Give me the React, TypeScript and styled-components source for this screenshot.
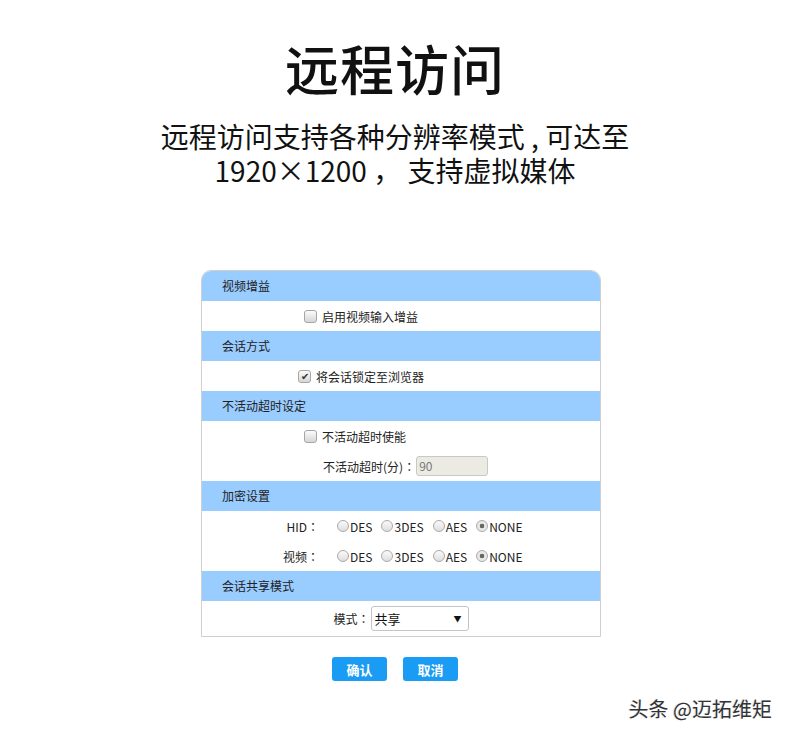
import styled, { createGlobalStyle } from 'styled-components'

const GlobalStyle = createGlobalStyle`
	html, body {
		margin: 0;
		padding: 0;
		background: #ffffff;
	}
	body {
		font-family: "Noto Sans CJK SC", "Noto Sans", sans-serif;
		color: #222;
	}
`

type Option = { label: string; checked?: boolean }

const encOptions: Option[] = [
	{ label: 'DES' },
	{ label: '3DES' },
	{ label: 'AES' },
	{ label: 'NONE', checked: true },
]

function RadioGroup({ options }: { options: Option[] }) {
	return (
		<Options>
			{options.map((o) => (
				<RadioItem key={o.label}>
					<Radio $checked={o.checked} />
					{o.label}
				</RadioItem>
			))}
		</Options>
	)
}

function App() {
	return (
		<Page>
			<GlobalStyle />
			<Title>远程访问</Title>
			<Subtitle>
				远程访问支持各种分辨率模式 , 可达至
				<br />
				1920×1200 ， 支持虚拟媒体
			</Subtitle>
			<Panel>
				<SectionHeader>视频增益</SectionHeader>
				<Row $indent={102}>
					<Checkbox />
					<span>启用视频输入增益</span>
				</Row>
				<SectionHeader>会话方式</SectionHeader>
				<Row $indent={96}>
					<Checkbox $checked>✔</Checkbox>
					<span>将会话锁定至浏览器</span>
				</Row>
				<SectionHeader>不活动超时设定</SectionHeader>
				<Row $indent={102}>
					<Checkbox />
					<span>不活动超时使能</span>
				</Row>
				<Row $indent={121}>
					<span>
						不活动超时(分)<Colon>：</Colon>
					</span>
					<TextInput>90</TextInput>
				</Row>
				<SectionHeader>加密设置</SectionHeader>
				<Row>
					<FieldLabel>
						HID<Colon>：</Colon>
					</FieldLabel>
					<RadioGroup options={encOptions} />
				</Row>
				<Row>
					<FieldLabel>
						视频<Colon>：</Colon>
					</FieldLabel>
					<RadioGroup options={encOptions} />
				</Row>
				<SectionHeader>会话共享模式</SectionHeader>
				<SelectRow>
					<span>
						模式<Colon>：</Colon>
					</span>
					<Select>
						<span>共享</span>
						<Arrow>▼</Arrow>
					</Select>
				</SelectRow>
			</Panel>
			<Buttons>
				<Button>确认</Button>
				<Button>取消</Button>
			</Buttons>
			<Watermark>头条 @迈拓维矩</Watermark>
		</Page>
	)
}

const Page = styled.div`
	position: relative;
	width: 790px;
	height: 736px;
	overflow: hidden;
	display: flex;
	flex-direction: column;
	align-items: center;
`
const Title = styled.h1`
	margin: 30px 0 0;
	font-size: 54px;
	line-height: 76px;
	font-weight: 500;
	color: #111;
	letter-spacing: 1px;
`
const Subtitle = styled.p`
	margin: 13px 0 0;
	font-size: 28px;
	line-height: 34px;
	text-align: center;
	color: #111;
`
const Panel = styled.div`
	align-self: flex-start;
	margin: 83px 0 0 201px;
	width: 398px;
	border: 1px solid #cfcfcf;
	border-radius: 10px 10px 0 0;
	overflow: hidden;
	font-size: 12px;
`
const SectionHeader = styled.div`
	height: 30px;
	line-height: 30px;
	padding-left: 20px;
	background: #99ccff;
	color: #222;
`
const Row = styled.div<{ $indent?: number }>`
	height: 30px;
	display: flex;
	align-items: center;
	padding-left: ${(p) => p.$indent ?? 0}px;
	color: #222;
`
const SelectRow = styled.div`
	height: 35px;
	display: flex;
	align-items: center;
	justify-content: center;
	gap: 1px;
`
const Colon = styled.span`
	font-family: "Noto Sans CJK TC", sans-serif;
`
const Checkbox = styled.span<{ $checked?: boolean }>`
	box-sizing: border-box;
	width: 13px;
	height: 13px;
	margin-right: 5px;
	border: 1px solid #a6a6a6;
	border-radius: 3px;
	background: linear-gradient(#fbfbfb, #d6d6d6);
	display: inline-flex;
	align-items: center;
	justify-content: center;
	font-size: 10px;
	line-height: 1;
	color: #333;
`
const TextInput = styled.span`
	box-sizing: border-box;
	width: 72px;
	height: 20px;
	margin-left: 1px;
	padding-left: 2px;
	border: 1px solid #c8c8c8;
	border-radius: 3px;
	background: #ebebe4;
	color: #777;
	line-height: 18px;
`
const FieldLabel = styled.span`
	width: 117px;
	margin-right: 18px;
	text-align: right;
`
const Options = styled.div`
	display: flex;
	gap: 9px;
`
const RadioItem = styled.span`
	display: inline-flex;
	align-items: center;
	color: #222;
`
const Radio = styled.span<{ $checked?: boolean }>`
	box-sizing: border-box;
	width: 12px;
	height: 12px;
	margin-right: 1px;
	border: 1px solid #aaaaaa;
	border-radius: 50%;
	background: ${(p) =>
		p.$checked
			? 'radial-gradient(circle, #666 0 2px, #e8e8e8 2.6px)'
			: 'linear-gradient(#fafafa, #dedede)'};
`
const Select = styled.div`
	box-sizing: border-box;
	width: 98px;
	height: 25px;
	padding: 0 6px 0 3px;
	border: 1px solid #c4c4c4;
	border-radius: 3px;
	display: flex;
	align-items: center;
	justify-content: space-between;
	font-size: 13px;
	color: #111;
`
const Arrow = styled.span`
	font-size: 8px;
	color: #111;
`
const Buttons = styled.div`
	display: flex;
	gap: 16px;
	margin-top: 20px;
`
const Button = styled.button`
	width: 55px;
	height: 24px;
	padding: 0;
	border: none;
	border-radius: 3px;
	background: #1a9cf5;
	color: #fff;
	font-family: "Noto Sans CJK SC", sans-serif;
	font-size: 13px;
	font-weight: 700;
`
const Watermark = styled.div`
	position: absolute;
	right: 18px;
	top: 694px;
	font-size: 20px;
	color: #333;
	text-shadow: 1px 1px 1px rgba(255, 255, 255, 0.9), -1px 0 1px rgba(0, 0, 0, 0.15);
`

export default App
